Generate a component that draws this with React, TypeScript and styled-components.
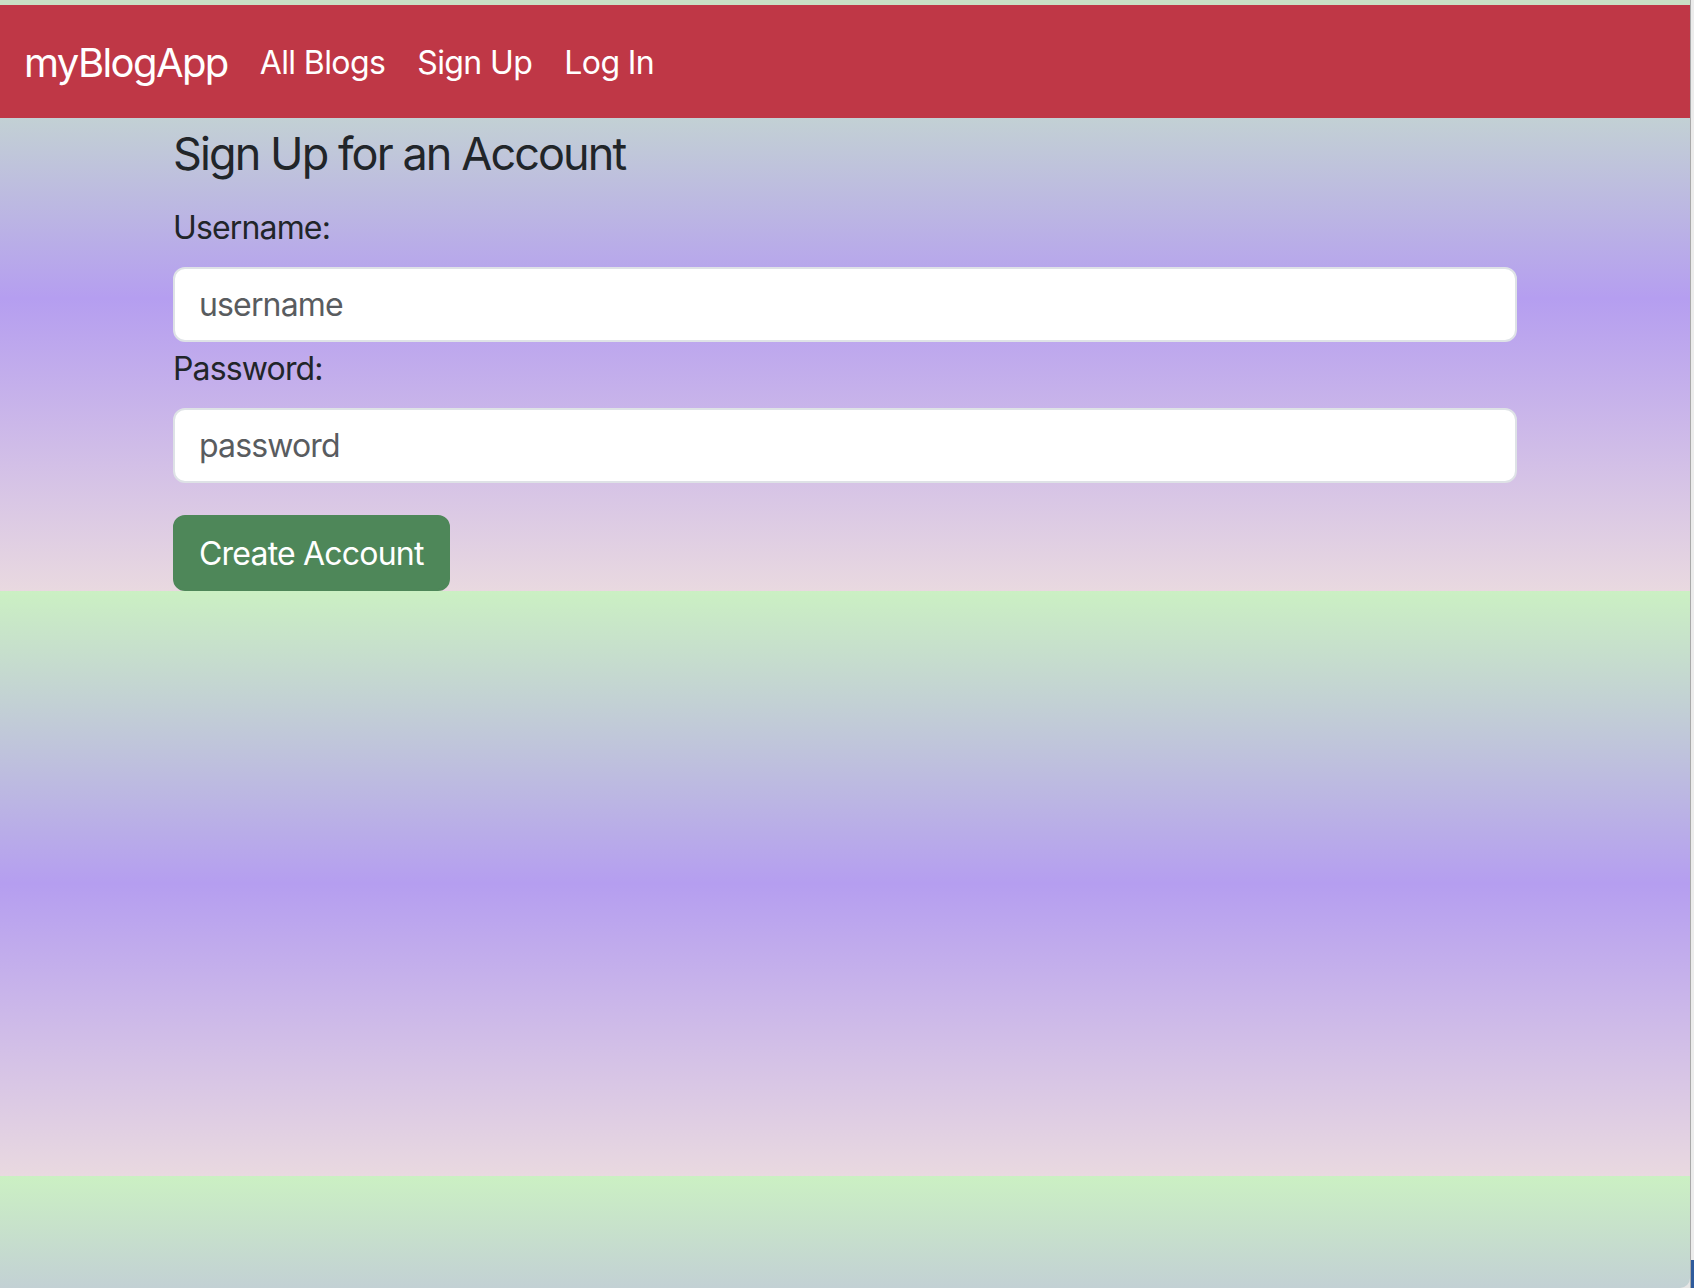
import React from "react";
import styled, { createGlobalStyle } from "styled-components";

const GlobalStyle = createGlobalStyle`
  html, body {
    margin: 0;
    padding: 0;
    background: #e6e6e6;
  }
  * { box-sizing: border-box; }
  body {
    font-family: "Inter", "Roboto", "Liberation Sans", sans-serif;
    color: #212529;
  }
`;

const Screen = styled.div`
  display: flex;
  width: 1694px;
  height: 1288px;
  overflow: hidden;
`;

const Page = styled.div`
  flex: 0 0 1690px;
  height: 1288px;
  padding-top: 5px;
  border-bottom-right-radius: 10px;
  background:
    linear-gradient(#c9dfc4, #c9dfc4) top left / 100% 5px no-repeat,
    linear-gradient(to bottom, #cbf0c3 0%, #b59ef0 50%, #e9d9e0 100%) 0 6px / 100% 585px repeat-y;
`;

const WindowEdge = styled.div`
  flex: 0 0 4px;
  height: 1288px;
  border-left: 1px solid #a9a9a9;
  background: linear-gradient(to bottom, #ececec 0%, #ececec 1260px, #2f5b9c 1260px);
`;

const NavBar = styled.nav`
  display: flex;
  align-items: center;
  height: 113px;
  padding: 2px 24px 0;
  background: #bf3746;
`;

const Brand = styled.a`
  font-size: 40px;
  line-height: 60px;
  color: #ffffff;
  text-decoration: none;
  margin-right: 16px;
  letter-spacing: -1.6px;
`;

const NavLink = styled.a`
  font-size: 32px;
  line-height: 48px;
  padding: 16px;
  color: #ffffff;
  text-decoration: none;
  letter-spacing: -0.6px;
`;

const Container = styled.main`
  width: 1344px;
  margin: 0 auto;
`;

const Title = styled.h4`
  font-size: 45px;
  font-weight: 400;
  line-height: 1.2;
  margin: 9px 0 23px;
  letter-spacing: -1.9px;
`;

const Form = styled.form`
  display: flex;
  flex-direction: column;
  align-items: stretch;
`;

const Label = styled.label<{ $gap?: number }>`
  display: block;
  font-size: 32px;
  line-height: 48px;
  letter-spacing: -0.85px;
  margin-top: ${(p) => p.$gap ?? 0}px;
  margin-bottom: 15px;
`;

const Input = styled.input`
  display: block;
  width: 100%;
  height: 75px;
  padding: 0 24px;
  font-family: inherit;
  font-size: 32px;
  letter-spacing: -0.85px;
  color: #212529;
  background: #ffffff;
  border: 2px solid #dee2e6;
  border-radius: 12px;
  outline: none;
  &::placeholder {
    color: #595c5f;
  }
`;

const SubmitButton = styled.button`
  align-self: flex-start;
  margin-top: 32px;
  height: 76px;
  padding: 0 24px;
  font-family: inherit;
  font-size: 32px;
  letter-spacing: -0.8px;
  color: #ffffff;
  background: #4e8759;
  border: 2px solid #4e8759;
  border-radius: 12px;
  cursor: pointer;
`;

export default function App() {
  return (
    <>
      <GlobalStyle />
      <Screen>
        <Page>
          <NavBar>
            <Brand href="#">myBlogApp</Brand>
            <NavLink href="#">All Blogs</NavLink>
            <NavLink href="#">Sign Up</NavLink>
            <NavLink href="#">Log In</NavLink>
          </NavBar>
          <Container>
            <Title>Sign Up for an Account</Title>
            <Form onSubmit={(e) => e.preventDefault()}>
              <Label htmlFor="username">Username:</Label>
              <Input id="username" type="text" placeholder="username" />
              <Label htmlFor="password" $gap={3}>Password:</Label>
              <Input id="password" type="password" placeholder="password" />
              <SubmitButton type="submit">Create Account</SubmitButton>
            </Form>
          </Container>
        </Page>
        <WindowEdge />
      </Screen>
    </>
  );
}
